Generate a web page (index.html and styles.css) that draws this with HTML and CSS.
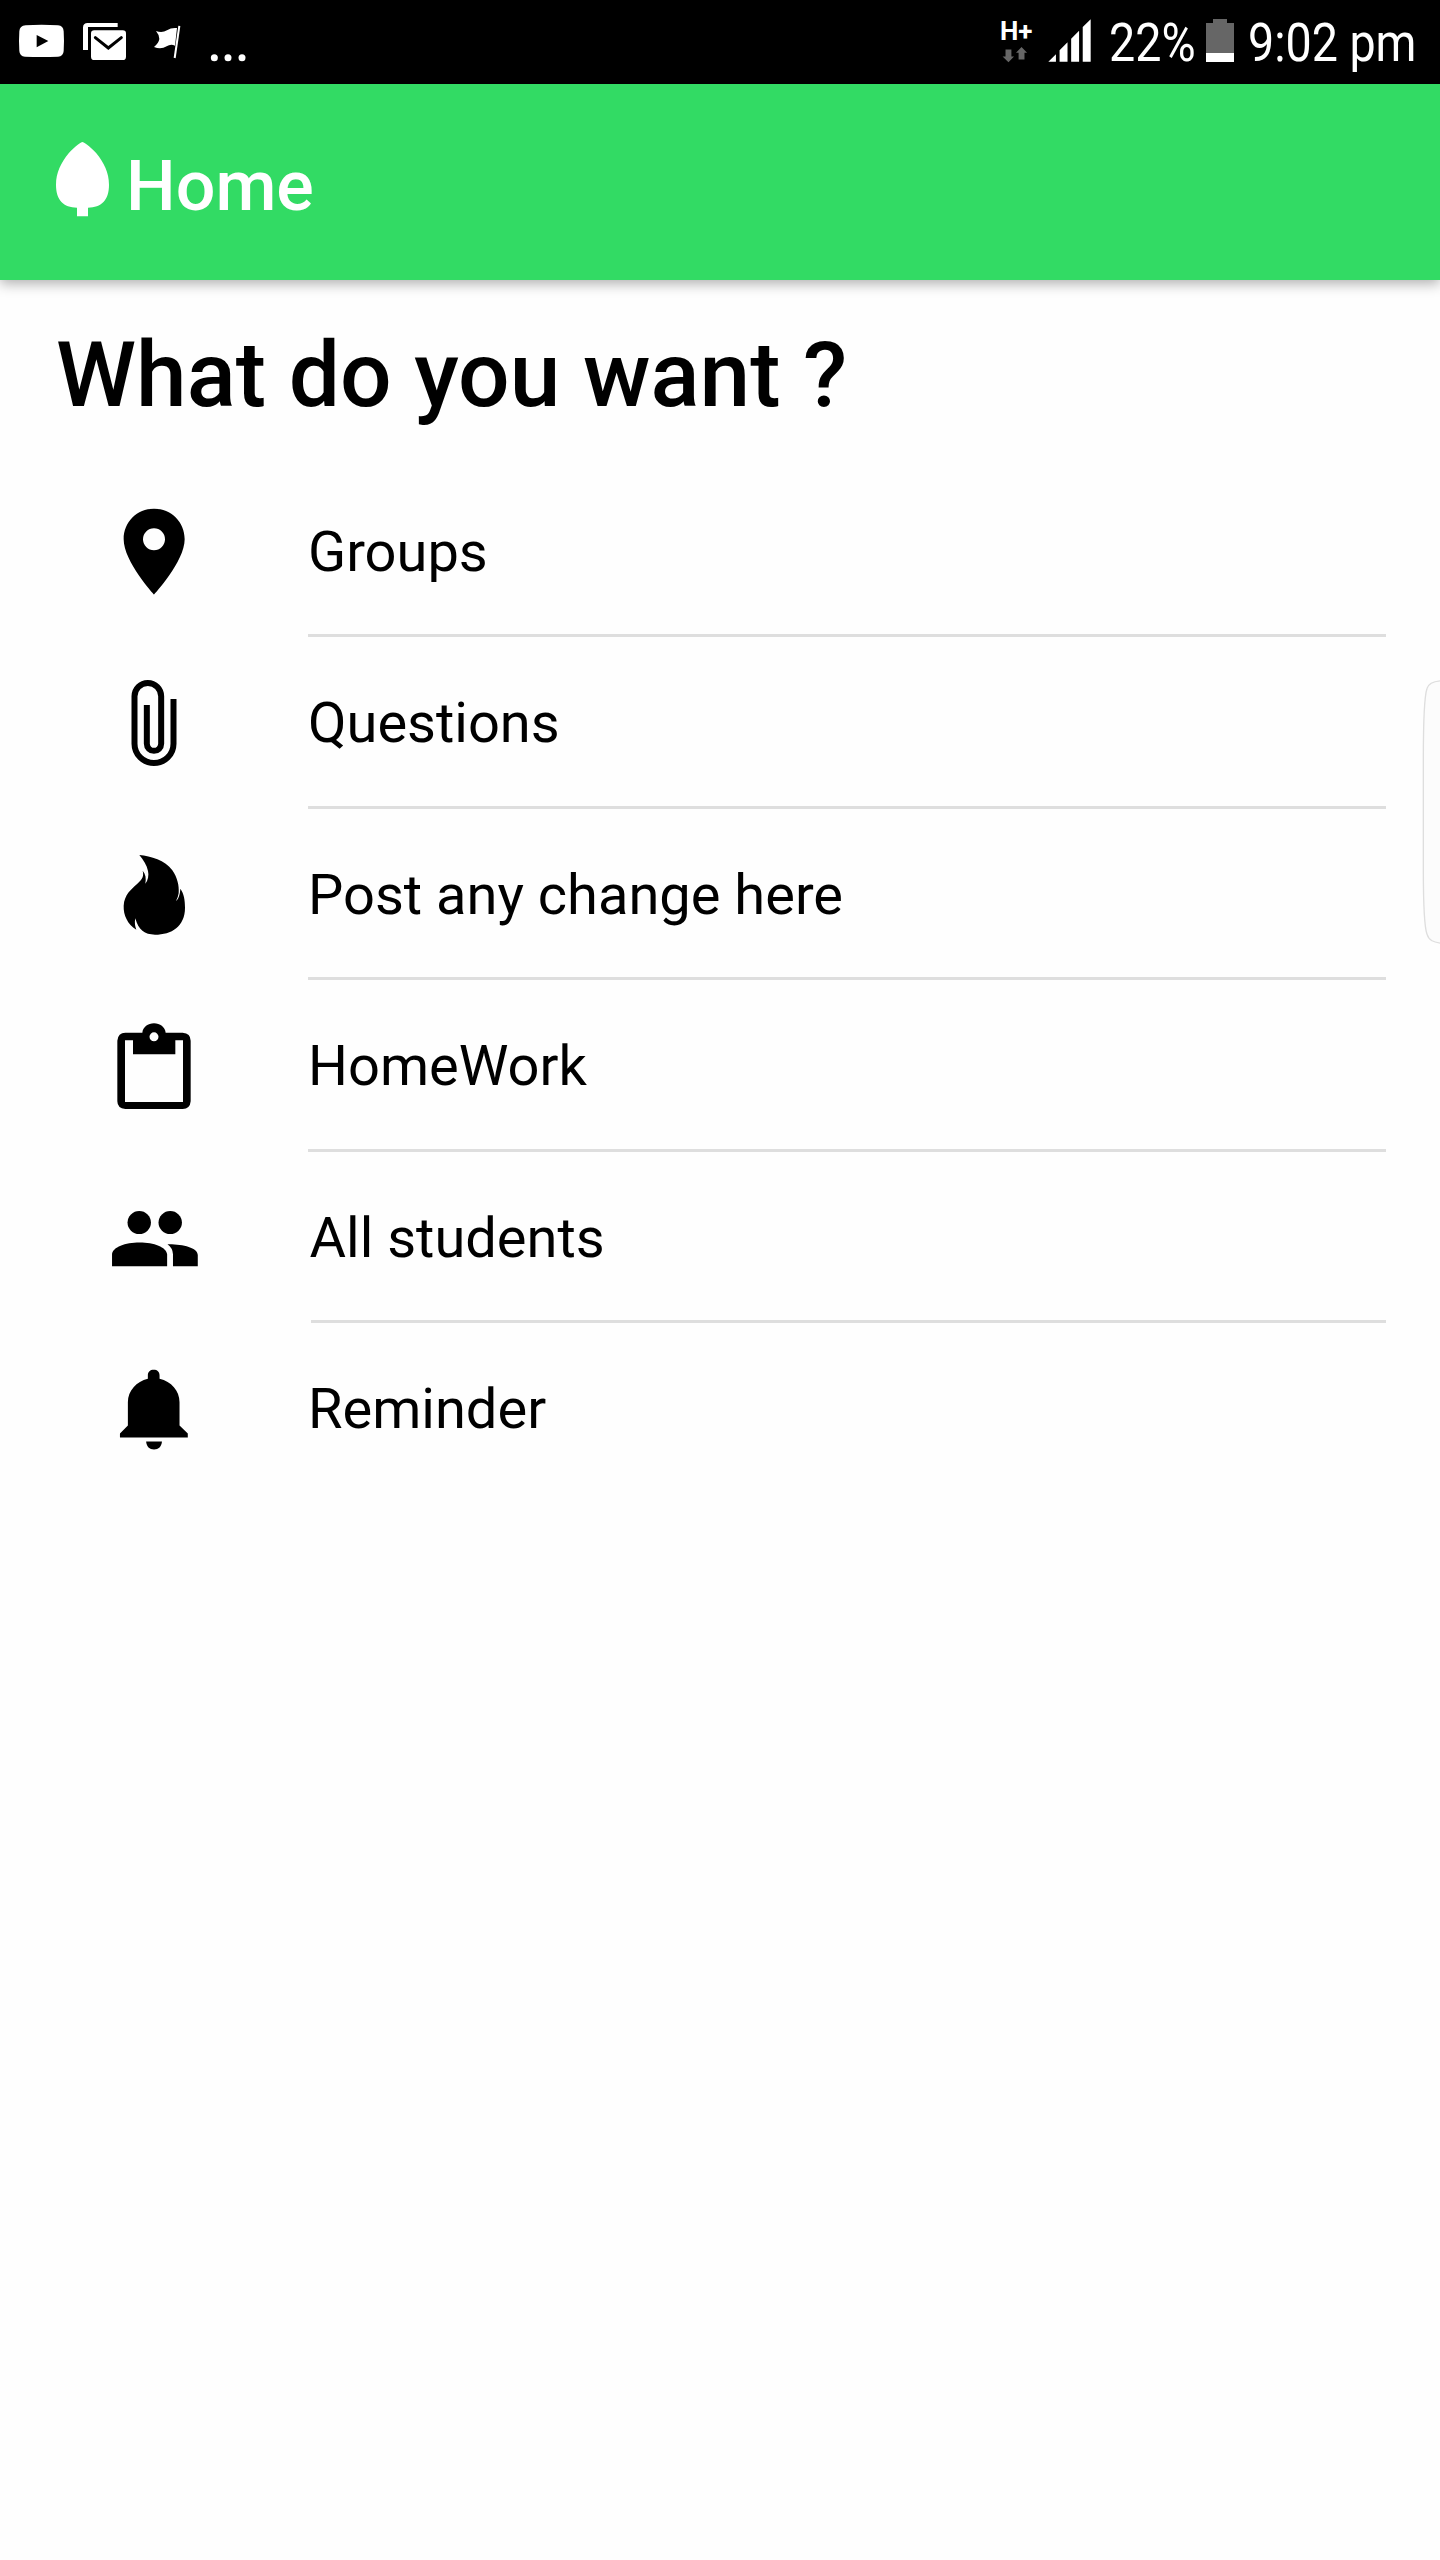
FILE: index.html
```html
<!DOCTYPE html>
<html lang="en">
<head>
<meta charset="utf-8">
<title>Home</title>
<link rel="stylesheet" href="styles.css">
</head>
<body>
<div class="status">
  <svg class="notifications" viewBox="0 0 750 252" fill="#fff">
    <path fill-rule="evenodd" d="M77 76Q124 73 174 76Q190 77 191 94Q193 124 191 153Q190 169 174 170Q124 172 75 170Q59 169 58 153Q56 124 58 94Q59 77 77 76ZM110 105V142L145 123Z"/>
    <path d="M249 150V83Q249 69 263 69H353V81H264V150Z"/>
    <rect x="273" y="91" width="105" height="89" rx="10"/>
    <path d="M286 113L325 144L364 113" fill="none" stroke="#000" stroke-width="9" stroke-linecap="round"/>
    <path d="M468 93Q486 100 501 91Q514 82 531 84L525 137Q512 131 500 139Q483 149 462 141Q476 130 478 117Q477 103 468 93Z"/>
    <path d="M535 77L541 78L527 175L521 173Z"/>
    <circle cx="643" cy="173" r="10.5"/><circle cx="684" cy="173" r="10.5"/><circle cx="726" cy="173" r="10.5"/>
  </svg>
  <div class="system">
    <div class="network">
      <span class="network-type">H+</span>
      <svg class="traffic" viewBox="68 136 78 52" fill="#666"><path d="M78 147H96V168H104L87 186L69 168H78ZM118 177V157H110L127 139L144 157H136V177Z"/></svg>
    </div>
    <svg class="signal" viewBox="204 0 130 252" fill="#fff"><path d="M205 186L228 163V186ZM239 186V151L263 127V186ZM274 186V116L298 92V186ZM309 186V81L333 57V186Z"/></svg>
    <span class="percent"><span class="narrow">22%</span></span>
    <svg class="battery" viewBox="678 0 84 252"><path fill="#666" d="M678 69H699V57H741V69H762V160H678Z"/><path fill="#fff" d="M678 159H762V186H678Z"/></svg>
    <span class="time"><span class="narrow">9:02 pm</span></span>
  </div>
</div>
<header class="toolbar">
  <svg class="leaf" viewBox="78 64 159 226" fill="#fff"><path d="M157 66C167 69 187 86 199 100C222 128 237 159 237 194C237 241 214 262 174 263V289H141V263C101 262 78 241 78 194C78 159 93 128 116 100C128 86 148 69 157 66Z"/></svg>
  <span class="toolbar-title">Home</span>
</header>
<main>
  <h1>What do you want ?</h1>
  <ul class="menu">
    <li class="row">
      <svg class="icon" viewBox="42 -73.5 300 514"><path fill-rule="evenodd" d="M192 55C141 55 101 95 101 146C101 213 192 312 192 312S284 213 284 146C284 95 244 55 192 55ZM192 179A33 33 0 1 1 192 113A33 33 0 1 1 192 179Z"/></svg>
      <span class="label">Groups</span>
    </li>
    <li class="row">
      <svg class="icon" viewBox="42 441 300 514"><path fill="none" stroke="#000" stroke-width="18" d="M250.500 627V761A58.500 58 0 0 1 133.500 761V619A40 40 0 0 1 213.500 619V761A21.500 21.500 0 0 1 170.500 761V645"/></svg>
      <span class="label">Questions</span>
    </li>
    <li class="row">
      <svg class="icon" viewBox="42 -65 300 514"><path d="M148 73C183 76 225 89 247 119C262 140 268 166 266 188Q264 201 258 211C265 205 270 192 271 174C282 190 285 207 285 231C285 287 245 312 195 312C164 312 145 298 136 263C133 277 135 287 139 297C112 280 100 253 101 225C103 192 124 175 142 159C158 145 162 136 158 120C167 130 169 143 166 159C174 149 177 134 174 121C171 104 160 88 148 73Z"/></svg>
      <span class="label">Post any change here</span>
    </li>
    <li class="row">
      <svg class="icon" viewBox="42 449 300 514"><path fill-rule="evenodd" d="M106 607H157C159 590 174 579 192 579S225 590 227 607H278Q302 609 302 631V813Q300 836 278 836H106Q82 834 82 813V631Q84 607 106 607ZM105 630V815H279V630H256V672H129V630ZM192 606A13.500 13.500 0 1 0 192 633A13.500 13.500 0 1 0 192 606Z"/></svg>
      <span class="label">HomeWork</span>
    </li>
    <li class="row short">
      <svg class="icon" viewBox="42 -56.7 300 514"><g transform="scale(1.033 1)"><ellipse cx="143" cy="155" rx="34" ry="34.500"/><ellipse cx="233" cy="155" rx="34" ry="34.500"/><path d="M64 286V250C66 229 102 215 144 215S222 229 224 250V286ZM241 286V250Q240 231 225 220C267 219 313 230 313 252V286Z"/></g></svg>
      <span class="label">All students</span>
    </li>
    <li class="row">
      <svg class="icon" viewBox="42 457.5 300 514"><g transform="scale(1.033 1)"><path d="M168 625V615C168 604 175 598 185 598S202 604 202 615V625C236 633 260 661 260 695V765L284 789V801H87V789L110 765V695C110 661 135 633 168 625ZM163 813H209C208 828 199 837 186 837S164 828 163 813Z"/></g></svg>
      <span class="label">Reminder</span>
    </li>
  </ul>
</main>
<div class="edge-handle"><svg viewBox="0 0 54 800"><path d="M56 5C32 7 19 14 15 28Q4 60 4 240V570Q4 735 15 765C21 785 35 789 56 792" fill="#fcfcfc" stroke="#dedede" stroke-width="4"/></svg></div>
</body>
</html>
```
FILE: styles.css
```css
* { box-sizing: border-box; }
body {
  margin: 0;
  width: 1440px;
  height: 2560px;
  position: relative;
  overflow: hidden;
  background: #fefefe;
  color: #000;
  font-family: Roboto, sans-serif;
}
svg { display: block; }
.status {
  display: flex;
  justify-content: space-between;
  height: 84px;
  background: #000;
  color: #fff;
}
.notifications { width: 250px; height: 84px; }
.system { display: flex; width: 440px; }
.network { width: 48px; padding-top: 17px; }
.network-type { display: block; font-weight: 700; font-size: 26px; line-height: 29px; }
.traffic { width: 26px; height: 17px; margin-left: 2px; }
.signal { width: 43px; height: 84px; margin-right: 18px; }
.percent, .time { font-size: 54.500px; line-height: 84px; white-space: nowrap; }
.percent { width: 97px; }
.narrow { display: inline-block; transform: scaleX(.855); transform-origin: 0 50%; }
.battery { width: 28px; height: 84px; margin-right: 14px; }
.time { width: 190px; }
.toolbar {
  display: flex;
  height: 196px;
  padding: 57px 0 0 56px;
  background: #32db64;
  color: #fff;
  box-shadow: 0 4px 12px rgba(0, 0, 0, .3);
}
.leaf { width: 53px; height: 76px; margin-right: 17px; }
.toolbar-title { padding-top: 4px; font-size: 70px; line-height: 82px; font-weight: 500; }
h1 { margin: 0; padding: 42px 0 0 56px; height: 185.500px; font-size: 91px; line-height: 106px; font-weight: 500; }
.menu { margin: 0; padding: 0 54px 0 104px; list-style: none; }
.row { display: flex; height: 171.500px; }
.icon { width: 100px; height: 171.400px; margin-right: 104px; }
.label { flex: 1; padding-top: 53px; font-size: 56px; line-height: 66px; border-bottom: 3px solid #dedede; }
.short .icon { margin-right: 107px; }
.short .label { text-indent: -1.500px; }
.row:last-child .label { border: 0; }
.edge-handle { position: absolute; left: 1422px; top: 679px; }
.edge-handle svg { width: 18px; height: 267px; }
```
